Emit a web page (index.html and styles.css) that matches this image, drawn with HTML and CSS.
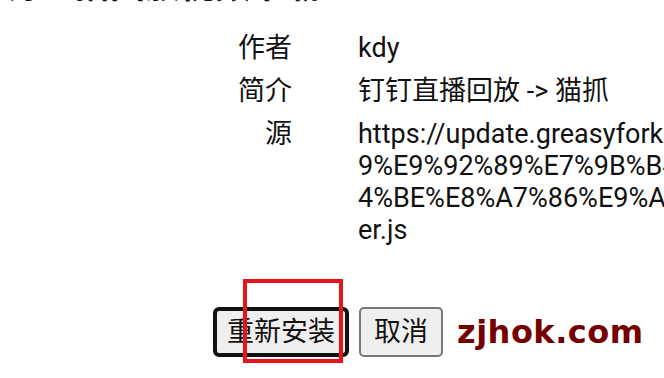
FILE: index.html
```html
<!DOCTYPE html>
<html lang="zh-CN">
<head>
    <meta charset="UTF-8">
    <meta name="viewport" content="width=device-width, initial-scale=1.0">
    <title>安装脚本</title>
    <link rel="stylesheet" href="styles.css">
</head>
<body>
    <div class="page">
        <h1 class="title">钉钉直播回放视频下载</h1>

        <dl class="info">
            <dt>作者</dt>
            <dd>kdy</dd>

            <dt>简介</dt>
            <dd>钉钉直播回放 -&gt; 猫抓</dd>

            <dt>源</dt>
            <dd class="url">https://update.greasyfork.org/scripts/469236/%E9%92%89%E9%92%89%E7%9B%B4%E6%92%AD%E5%9B%9E%E6%94%BE%E8%A7%86%E9%A2%91%E4%B8%8B%E8%BD%B.user.js</dd>
        </dl>

        <div class="actions">
            <button class="btn btn-focus">重新安装</button>
            <button class="btn">取消</button>
            <span class="mark">zjhok.com</span>
            <span class="highlight"></span>
        </div>
    </div>
</body>
</html>
```

FILE: styles.css
```css
html, body { margin: 0; overflow: hidden; background: #fff; }
body { font-family: Roboto, "Noto Sans CJK SC", sans-serif; color: #111; width: 664px; height: 378px; }

.page { width: 1100px; }

.title {
    font-size: 35px;
    font-weight: bold;
    line-height: 40px;
    white-space: nowrap;
    margin: -33px 0 25px -30px;
}

.info {
    display: grid;
    grid-template-columns: 292px 716px;
    column-gap: 66px;
    row-gap: 11px;
    margin: 0;
    font-size: 27px;
    line-height: 32px;
}
.info dt { text-align: right; }
.info dd { margin: 0; }
.info .url { word-break: break-all; }

.actions {
    position: relative;
    display: flex;
    align-items: center;
    gap: 10px;
    margin-top: 61px;
    padding-left: 213px;
}
.btn {
    font-family: Roboto, "Noto Sans CJK SC", sans-serif;
    font-size: 27px;
    line-height: 34px;
    color: #111;
    background: #efefef;
    border: 2px solid #767676;
    border-radius: 5px;
    padding: 6px 13px;
}
.btn-focus {
    border: 4px solid #111;
    border-radius: 6px;
    padding: 4px 10px;
}
.mark {
    margin-left: 4px;
    font-family: "DejaVu Sans", sans-serif;
    font-weight: bold;
    font-size: 32px;
    letter-spacing: 0.5px;
    color: #750000;
}
.highlight {
    position: absolute;
    left: 243px;
    top: -28px;
    width: 100px;
    height: 84px;
    box-sizing: border-box;
    border: 4px solid #e8141c;
}
```
